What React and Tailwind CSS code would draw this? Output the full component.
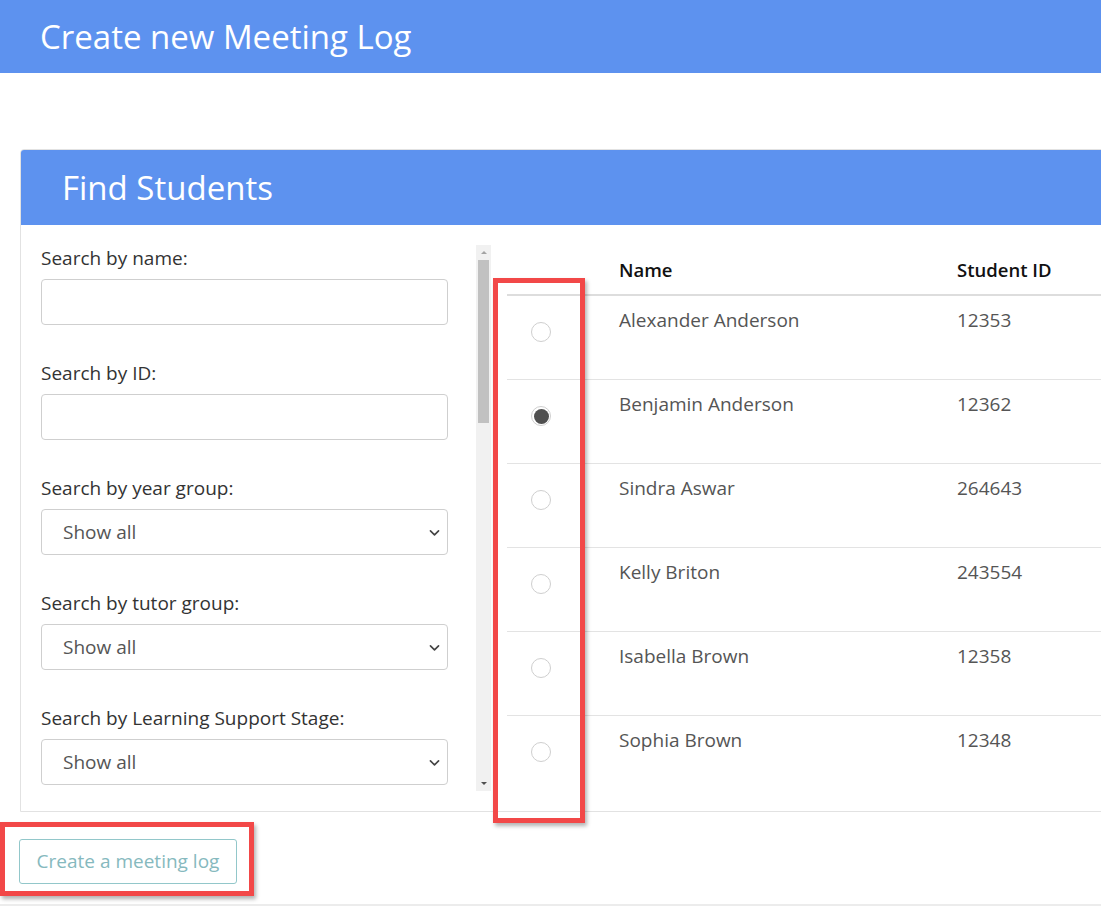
import React from "react";

const students = [
  { name: "Alexander Anderson", id: "12353", checked: false },
  { name: "Benjamin Anderson", id: "12362", checked: true },
  { name: "Sindra Aswar", id: "264643", checked: false },
  { name: "Kelly Briton", id: "243554", checked: false },
  { name: "Isabella Brown", id: "12358", checked: false },
  { name: "Sophia Brown", id: "12348", checked: false },
];

function Chevron() {
  return (
    <svg width="13" height="13" viewBox="0 0 16 16" fill="none" stroke="#444" strokeWidth="2" strokeLinecap="round" strokeLinejoin="round">
      <path d="M3 6l5 5 5-5" />
    </svg>
  );
}

function TextField({ label }) {
  return (
    <div className="flex flex-col">
      <label className="text-[19px] leading-[24px] text-[#333] mb-[9px]">{label}</label>
      <div className="h-[46px] w-[407px] border border-[#cfcfcf] rounded-[4px] bg-white" />
    </div>
  );
}

function SelectField({ label }) {
  return (
    <div className="flex flex-col">
      <label className="text-[19px] leading-[24px] text-[#333] mb-[9px]">{label}</label>
      <div className="h-[46px] w-[407px] border border-[#cfcfcf] rounded-[4px] bg-white flex items-center justify-between pl-[21px] pr-[6px]">
        <span className="text-[19px] text-[#555]">Show all</span>
        <Chevron />
      </div>
    </div>
  );
}

function Radio({ checked }) {
  return (
    <div className="w-[20px] h-[20px] rounded-full border border-[#cfcfcf] bg-white flex items-center justify-center">
      {checked && <div className="w-[15px] h-[15px] rounded-full bg-[#4f4f4f]" />}
    </div>
  );
}

export default function App() {
  return (
    <div className="relative w-full h-[909px] overflow-hidden bg-white" style={{ fontFamily: '"Open Sans", "Noto Sans", sans-serif' }}>
      <div className="h-[73px] bg-[#5d92ef] flex items-center px-[40px]">
        <h1 className="text-[33px] text-white leading-none">Create new Meeting Log</h1>
      </div>

      <div className="mt-[76px] ml-[20px] w-[1100px] border border-[#e2e2e2] rounded-tl-[4px] overflow-hidden">
        <div className="h-[75px] bg-[#5d92ef] flex items-center px-[41px]">
          <h2 className="text-[33px] text-white leading-none">Find Students</h2>
        </div>
        <div className="flex h-[586px]">
          <div className="w-[470px] flex pt-[20px] pb-[20px]">
            <div className="flex-1 pl-[20px] flex flex-col gap-[36px] pt-[1px]">
              <TextField label="Search by name:" />
              <TextField label="Search by ID:" />
              <SelectField label="Search by year group:" />
              <SelectField label="Search by tutor group:" />
              <SelectField label="Search by Learning Support Stage:" />
            </div>
            <div className="w-[15px] bg-[#f1f1f1] flex flex-col items-center">
              <div className="h-[15px] flex items-center justify-center">
                <div className="w-0 h-0 border-l-[3px] border-r-[3px] border-b-[3px] border-l-transparent border-r-transparent border-b-[#a3a3a3]" />
              </div>
              <div className="w-[11px] h-[163px] bg-[#c1c1c1]" />
              <div className="flex-1" />
              <div className="h-[15px] flex items-center justify-center">
                <div className="w-0 h-0 border-l-[3px] border-r-[3px] border-t-[3px] border-l-transparent border-r-transparent border-t-[#505050]" />
              </div>
            </div>
          </div>

          <div className="flex-1 ml-[16px] pt-[21px]">
            <div className="flex h-[50px] items-center border-b-2 border-[#dddddd] text-[18.5px] font-semibold text-[#111]">
              <div className="w-[112px]" />
              <div className="w-[338px]">Name</div>
              <div>Student ID</div>
            </div>
            {students.map((s, i) => (
              <div key={s.id} className={`flex h-[84px] ${i < students.length - 1 ? "border-b border-[#e3e3e3]" : ""}`}>
                <div className="w-[112px] pl-[24px] pt-[26px]">
                  <Radio checked={s.checked} />
                </div>
                <div className="w-[338px] pt-[11px] text-[19px] leading-[26px] text-[#555]">{s.name}</div>
                <div className="pt-[11px] text-[19px] leading-[26px] text-[#555]">{s.id}</div>
              </div>
            ))}
          </div>
        </div>
      </div>

      <div className="ml-[19px] mt-[27px]">
        <button className="h-[45px] w-[218px] border border-[#92c7ca] rounded-[3px] text-[19px] text-[#86b9be] bg-white">
          Create a meeting log
        </button>
      </div>
      <div className="mt-[20px] h-[2px] bg-[#ececec]" />

      <div className="absolute left-[493px] top-[278px] w-[92px] h-[545px] border-[5px] border-[#f24848] shadow-[2px_3px_4px_rgba(0,0,0,0.3)]" />
      <div className="absolute left-[0px] top-[822px] w-[254px] h-[74px] border-[5px] border-[#f24848] shadow-[2px_3px_4px_rgba(0,0,0,0.3)]" />
    </div>
  );
}
